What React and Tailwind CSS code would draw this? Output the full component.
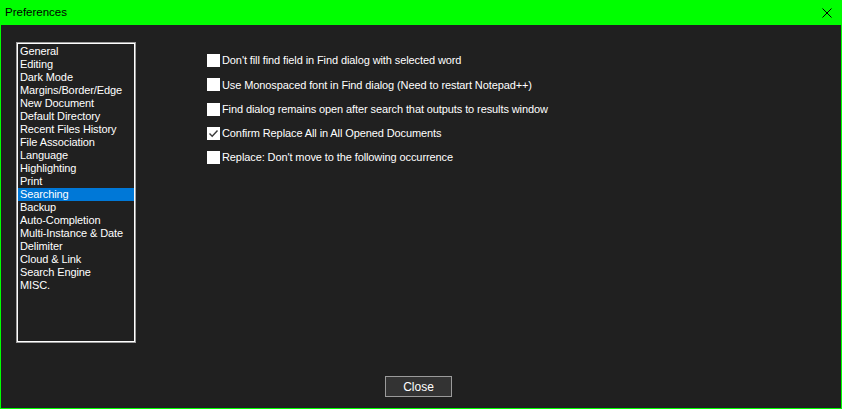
import React from 'react';

const pages = [
  'General', 'Editing', 'Dark Mode', 'Margins/Border/Edge', 'New Document',
  'Default Directory', 'Recent Files History', 'File Association', 'Language',
  'Highlighting', 'Print', 'Searching', 'Backup', 'Auto-Completion',
  'Multi-Instance & Date', 'Delimiter', 'Cloud & Link', 'Search Engine', 'MISC.',
];

const options = [
  { label: "Don't fill find field in Find dialog with selected word", checked: false },
  { label: 'Use Monospaced font in Find dialog (Need to restart Notepad++)', checked: false },
  { label: 'Find dialog remains open after search that outputs to results window', checked: false },
  { label: 'Confirm Replace All in All Opened Documents', checked: true },
  { label: "Replace: Don't move to the following occurrence", checked: false },
];

const Check = ({ checked }) => (
  <span className="w-[13px] h-[13px] bg-white flex items-center justify-center shrink-0">
    {checked && (
      <svg width="11" height="11" viewBox="0 0 11 11">
        <path d="M1.5 5.5 L4.2 8.2 L9.5 2.5" fill="none" stroke="#3a3a3a" strokeWidth="1.4" />
      </svg>
    )}
  </span>
);

export default function App() {
  return (
    <div
      className="w-[842px] h-[409px] flex flex-col bg-[#00ff00] px-px pb-px"
      style={{ fontFamily: '"Liberation Sans", Arial, sans-serif' }}
    >
      <div className="h-[25px] flex items-center justify-between pl-[4px] pr-[9px] shrink-0">
        <span className="text-[11.5px] text-black">Preferences</span>
        <svg width="10" height="10" viewBox="0 0 10 10">
          <path d="M0.5 0.5 L9.5 9.5 M9.5 0.5 L0.5 9.5" stroke="#000" strokeWidth="1" />
        </svg>
      </div>

      <div className="flex-1 bg-[#202020] flex flex-col">
        <div className="flex pt-[17px] pl-[15px]">
          <div className="w-[120px] h-[301px] border border-[#a0a0a0] shrink-0">
            <div className="w-full h-full border border-white bg-[#202020] pt-px text-[11px] tracking-[-0.1px] text-white">
              {pages.map((p) => (
                <div
                  key={p}
                  className={`h-[13px] leading-[13px] px-[2px] whitespace-nowrap ${p === 'Searching' ? 'bg-[#0078d7]' : ''}`}
                >
                  {p}
                </div>
              ))}
            </div>
          </div>

          <div className="ml-[71px] pt-[12px] flex flex-col gap-[11.25px]">
            {options.map((o) => (
              <div key={o.label} className="flex items-center h-[13px] text-[11px] tracking-[-0.1px] text-white">
                <Check checked={o.checked} />
                <span className="ml-[2px] whitespace-nowrap">{o.label}</span>
              </div>
            ))}
          </div>
        </div>

        <div className="flex pl-[384px] pt-[33px]">
          <button className="w-[67px] h-[21px] bg-[#333333] border border-[#9b9b9b] text-[12px] text-white leading-none">
            Close
          </button>
        </div>
      </div>
    </div>
  );
}
